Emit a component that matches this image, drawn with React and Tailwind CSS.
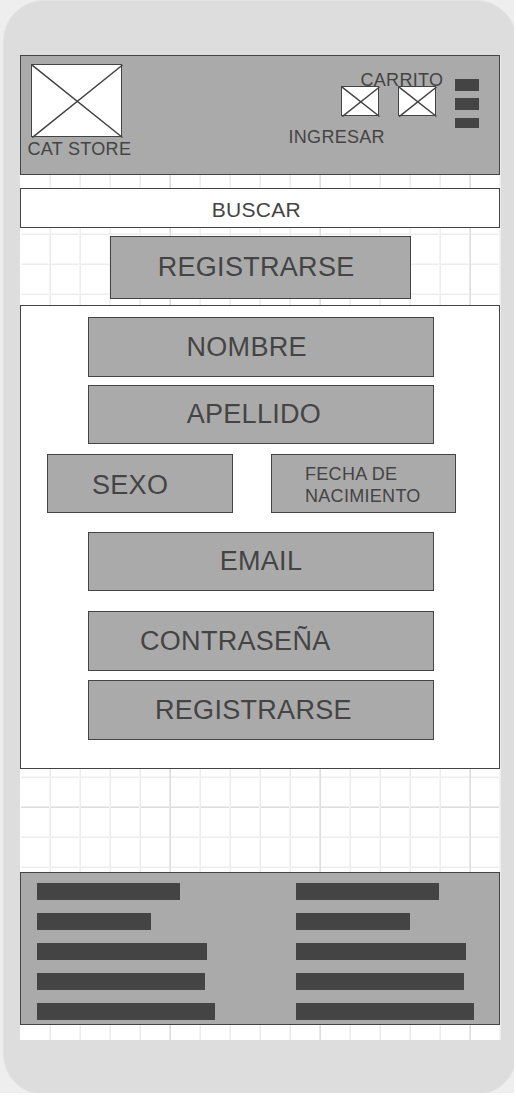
const BAR_WIDTHS = ["w-[143px]", "w-[114px]", "w-[170px]", "w-[168px]", "w-[178px]"];

function ImageBox({ className, w, h }) {
  return (
    <svg className={`block overflow-visible ${className}`} viewBox={`0 0 ${w} ${h}`} fill="none" stroke="#444">
      <rect x="0.5" y="0.5" width={w - 1} height={h - 1} fill="#fff" />
      <path d={`M0.8 0.8L${w + 0.5} ${h + 0.5}M${w + 0.5} 1L1.2 ${h + 0.7}`} strokeWidth="1.5" />
    </svg>
  );
}

function Box({ className, children }) {
  return (
    <div className={`border border-[#444] bg-[#aaa] text-[27px] leading-[28px] tracking-[0.3px] whitespace-nowrap ${className}`}>
      {children}
    </div>
  );
}

function GridPattern({ y, major }) {
  const xs = Array.from({ length: 16 }, (_, i) => 30 + i * 30);
  return (
    <svg className="absolute inset-0 h-full w-full" aria-hidden="true">
      {y.map((v) => (
        <g key={v}>
          <rect x="1" y={v - 1} width="480" height="1" fill={v === major ? "#eaeaea" : "#f6f6f6"} />
          <rect x="1" y={v} width="480" height="1" fill={v === major ? "#dedede" : "#ededed"} />
        </g>
      ))}
      {xs.map((x) => (
        <g key={x}>
          <rect x={x - 1} y="0" width="1" height="100%" fill={x % 150 === 0 && x < 480 ? "#eaeaea" : "#f4f4f4"} />
          <rect x={x} y="0" width="1" height="100%" fill={x % 150 === 0 ? "#dedede" : "#ededed"} />
        </g>
      ))}
    </svg>
  );
}

function FooterColumn() {
  return (
    <div className="flex flex-col gap-[13px]">
      {BAR_WIDTHS.map((w) => (
        <div key={w} className={`h-[17px] bg-[#444] ${w}`} />
      ))}
    </div>
  );
}

export default function App() {
  return (
    <div className="h-[1093px] w-[514px] overflow-hidden bg-[#eee] pl-[3px] font-['Liberation_Sans',Arial,sans-serif] text-[#444]">
      <div className="h-[1095px] w-[514px] rounded-[41px] border border-[#e3e3e3] bg-[#ddd] pt-[54px] pl-4">
        <main className="relative flex h-[985px] w-[481px] flex-col bg-white">
          <GridPattern y={[179, 209, 239, 722, 752, 782, 812]} major={752} />

          <header className="relative flex h-[120px] w-[480px] border border-[#444] bg-[#aaa] text-[18px] leading-[22px] tracking-[0.3px] whitespace-nowrap">
            <div className="w-[267px] pt-2">
              <ImageBox className="ml-[10px] h-[73px] w-[91px]" w={91} h={73} />
              <div className="pt-px pl-[6.5px]">CAT STORE</div>
            </div>
            <div className="w-[167px] pt-[13px]">
              <div className="h-[17px] pl-[72.5px]">CARRITO</div>
              <div className="relative flex gap-[19px] pl-[53px]">
                <ImageBox className="h-[30px] w-[38px]" w={38} h={30} />
                <ImageBox className="h-[30px] w-[38px]" w={38} h={30} />
              </div>
              <div className="pt-[10px] pl-[0.5px]">INGRESAR</div>
            </div>
            <div className="flex flex-col pt-[23px]">
              <div className="h-3 w-6 bg-[#444]" />
              <div className="mt-[7px] h-3 w-6 bg-[#444]" />
              <div className="mt-2 h-[10px] w-6 bg-[#444]" />
            </div>
          </header>

          <div className="relative mt-[13px] h-10 w-[480px] border border-[#444] bg-white pt-[10px] pl-[190.7px] text-[21px] leading-[22px] tracking-[0.3px]">
            BUSCAR
          </div>

          <Box className="relative mt-2 ml-[90px] h-[63px] w-[301px] pt-4 pl-[46.7px]">REGISTRARSE</Box>

          <section className="relative mt-[6px] flex h-[464px] w-[480px] flex-col border border-[#444] bg-white pt-[11px]">
            <Box className="ml-[67px] h-[60px] w-[346px] pt-[15px] pl-[97.5px]">NOMBRE</Box>
            <Box className="mt-2 ml-[67px] h-[59px] w-[346px] pt-[14px] pl-[97.7px]">APELLIDO</Box>
            <div className="mt-[10px] ml-[26px] flex gap-[38px]">
              <Box className="h-[59px] w-[186px] pt-4 pl-[44px]">SEXO</Box>
              <div className="h-[59px] w-[185px] border border-[#444] bg-[#aaa] pt-2 pl-[33px] text-[18px] leading-[22px] tracking-[0.3px]">
                FECHA DE
                <br />
                NACIMIENTO
              </div>
            </div>
            <Box className="mt-[19px] ml-[67px] h-[59px] w-[346px] pt-[14px] pl-[130.7px]">EMAIL</Box>
            <Box className="mt-5 ml-[67px] h-[60px] w-[346px] pt-[15px] pl-[51px]">CONTRASEÑA</Box>
            <Box className="mt-[9px] ml-[67px] h-[60px] w-[346px] pt-[15px] pl-[66px]">REGISTRARSE</Box>
          </section>

          <footer className="relative mt-[103px] flex h-[153px] w-[480px] gap-[81px] border border-[#444] bg-[#aaa] pt-[10px] pl-4">
            <FooterColumn />
            <FooterColumn />
          </footer>
        </main>
      </div>
    </div>
  );
}
